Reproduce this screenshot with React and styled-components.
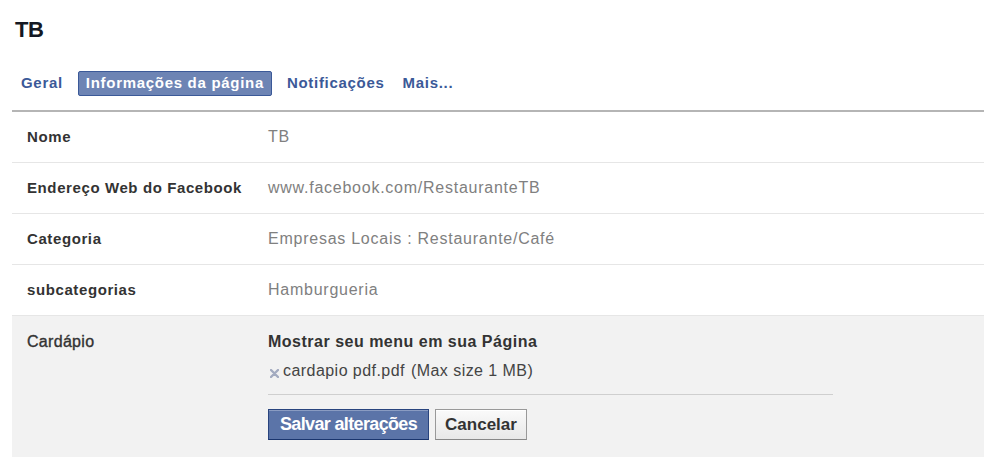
import React from "react";
import styled, { createGlobalStyle } from "styled-components";

const Global = createGlobalStyle`
  html, body { margin: 0; padding: 0; background: #fff; }
  body { font-family: "Liberation Sans", Arial, sans-serif; }
`;

const Page = styled.div`
  width: 984px;
  height: 466px;
  padding-left: 12px;
  box-sizing: border-box;
  overflow: hidden;
`;

const Title = styled.h1`
  margin: 0;
  padding: 17px 0 0 3px;
  height: 43px;
  box-sizing: border-box;
  font-size: 22px;
  font-weight: bold;
  color: #141823;
  letter-spacing: -0.5px;
`;

const Tabs = styled.nav`
  display: flex;
  align-items: center;
  height: 24px;
  margin-top: 28px;
  padding-left: 1px;
  padding-bottom: 15px;
  border-bottom: 2px solid #b5b5b5;
`;

const Tab = styled.a`
  display: inline-flex;
  align-items: center;
  height: 25px;
  box-sizing: border-box;
  padding: 0 7px 1px;
  margin-right: ${(p) => p.$gap || 0}px;
  font-size: 15px;
  letter-spacing: 0.7px;
  font-weight: bold;
  color: ${(p) => (p.$active ? "#fff" : "#3b5998")};
  background: ${(p) => (p.$active ? "#6d84b4" : "transparent")};
  border: 1px solid ${(p) => (p.$active ? "#3b5998" : "transparent")};
  border-radius: 2px;
  cursor: pointer;
`;

const Row = styled.div`
  display: grid;
  grid-template-columns: 256px 1fr;
  align-items: center;
  height: 51px;
  box-sizing: border-box;
  padding-bottom: 1px;
  border-bottom: 1px solid #e6e6e6;
`;

const Label = styled.div`
  padding-left: 15px;
  font-size: 15px;
  letter-spacing: 0.6px;
  font-weight: bold;
  color: #333;
`;

const Value = styled.div`
  font-size: 16px;
  letter-spacing: 0.75px;
  color: #808080;
`;

const EditSection = styled.div`
  display: grid;
  grid-template-columns: 256px 565px;
  background: #f2f2f2;
  height: 141px;
  box-sizing: border-box;
  padding-top: 17px;
`;

const EditLabel = styled(Label)`
  line-height: 18px;
  font-weight: normal;
  -webkit-text-stroke: 0.35px #333;
  font-size: 16px;
  letter-spacing: 0.3px;
`;

const EditBody = styled.div`
  display: flex;
  flex-direction: column;
`;

const Heading = styled.div`
  font-size: 16px;
  letter-spacing: 0.5px;
  font-weight: bold;
  color: #333;
  line-height: 18px;
`;

const FileLine = styled.div`
  display: flex;
  align-items: center;
  margin-top: 11px;
  font-size: 16px;
  letter-spacing: 0.45px;
  color: #444;
  line-height: 18px;
  padding-bottom: 14px;
  border-bottom: 1px solid #cfcfcf;
`;

const RemoveIcon = styled.svg`
  width: 9px;
  height: 9px;
  margin: 4px 4px 0 2px;
  flex: none;
`;

const Note = styled.span`
  margin-left: 6px;
`;

const Buttons = styled.div`
  display: flex;
  gap: 6px;
  margin-top: 14px;
`;

const Button = styled.button`
  height: 31px;
  box-sizing: border-box;
  padding: 0 ${(p) => (p.$primary ? 11 : 9)}px;
  font-family: "Liberation Sans", Arial, sans-serif;
  font-size: ${(p) => (p.$primary ? 18 : 17)}px;
  font-weight: bold;
  letter-spacing: ${(p) => (p.$primary ? "-0.65px" : "0")};
  color: ${(p) => (p.$primary ? "#fff" : "#333")};
  background: ${(p) =>
    p.$primary ? "#5b74a8" : "linear-gradient(#fafafa, #e8e8e8)"};
  border: 1px solid ${(p) => (p.$primary ? "#29447e" : "#999")};
  border-bottom-color: ${(p) => (p.$primary ? "#1a356e" : "#888")};
  box-shadow: ${(p) =>
    p.$primary ? "inset 0 1px 0 #8a9cc2" : "inset 0 1px 0 #fff"};
  cursor: pointer;
`;

const rows = [
  ["Nome", "TB"],
  ["Endereço Web do Facebook", "www.facebook.com/RestauranteTB"],
  ["Categoria", "Empresas Locais : Restaurante/Café"],
  ["subcategorias", "Hamburgueria"],
];

export default function App() {
  return (
    <Page>
      <Global />
      <Title>TB</Title>
      <Tabs>
        <Tab $gap={7}>Geral</Tab>
        <Tab $active $gap={7}>Informações da página</Tab>
        <Tab $gap={2}>Notificações</Tab>
        <Tab>Mais...</Tab>
      </Tabs>
      {rows.map(([l, v]) => (
        <Row key={l}>
          <Label>{l}</Label>
          <Value>{v}</Value>
        </Row>
      ))}
      <EditSection>
        <EditLabel>Cardápio</EditLabel>
        <EditBody>
          <Heading>Mostrar seu menu em sua Página</Heading>
          <FileLine>
            <RemoveIcon viewBox="0 0 9 9">
              <path d="M1 1 L8 8 M8 1 L1 8" stroke="#a3abc0" strokeWidth="2.4" strokeLinecap="round" />
            </RemoveIcon>
            cardapio pdf.pdf<Note>(Max size 1 MB)</Note>
          </FileLine>
          <Buttons>
            <Button $primary>Salvar alterações</Button>
            <Button>Cancelar</Button>
          </Buttons>
        </EditBody>
      </EditSection>
    </Page>
  );
}
